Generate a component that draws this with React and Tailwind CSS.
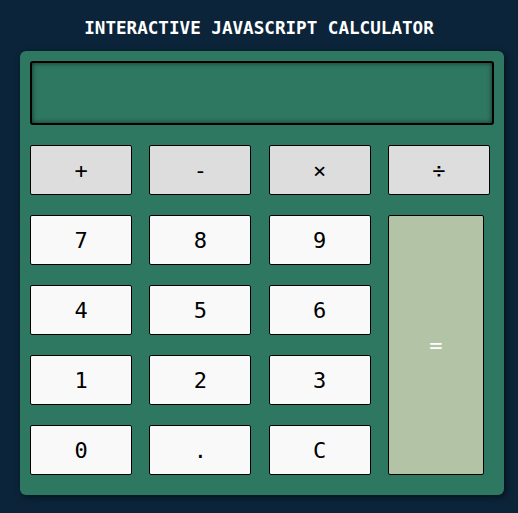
export default function App() {
  const nums = [
    ['7', '8', '9'],
    ['4', '5', '6'],
    ['1', '2', '3'],
    ['0', '.', 'C'],
  ];
  const ops = ['+', '-', '×', '÷'];

  return (
    <div
      className="min-h-[513px] bg-[#0b2439] pt-[16px]"
      style={{ fontFamily: '"DejaVu Sans Mono", monospace' }}
    >
      <h1 className="text-center text-white font-bold text-[17.6px] leading-[24px] mb-[11px]">
        INTERACTIVE JAVASCRIPT CALCULATOR
      </h1>

      <div className="mx-[20px] w-[484px] bg-[#2e7760] rounded-[6px] shadow-[2px_2px_6px_rgba(0,0,0,0.5)] pt-[10px] pb-[20px] px-[10px]">
        <div className="h-[64px] border-2 border-black rounded-[3px] shadow-[inset_0_0_5px_rgba(0,0,0,0.6)] bg-[#2e7760]"></div>

        <div className="mt-[20px] grid grid-cols-[102px_102px_102px_102px] gap-x-[17.33px] gap-y-[20px]">
          {ops.map((o) => (
            <button
              key={o}
              className="h-[50px] bg-[#dddddd] border border-black rounded-[2px] text-[22px] text-black"
            >
              {o}
            </button>
          ))}

          {nums.map((row, ri) =>
            row.map((n, ci) => (
              <button
                key={n}
                className="h-[50px] bg-[#f9f9f9] border border-black rounded-[2px] text-[22px] text-black"
                style={{ gridRow: ri + 2, gridColumn: ci + 1 }}
              >
                {n}
              </button>
            ))
          )}

          <button
            className="row-start-2 row-span-4 col-start-4 w-[96px] h-[260px] bg-[#b3c4a6] border border-black rounded-[2px] text-[22px] text-white"
          >
            =
          </button>
        </div>
      </div>
    </div>
  );
}
